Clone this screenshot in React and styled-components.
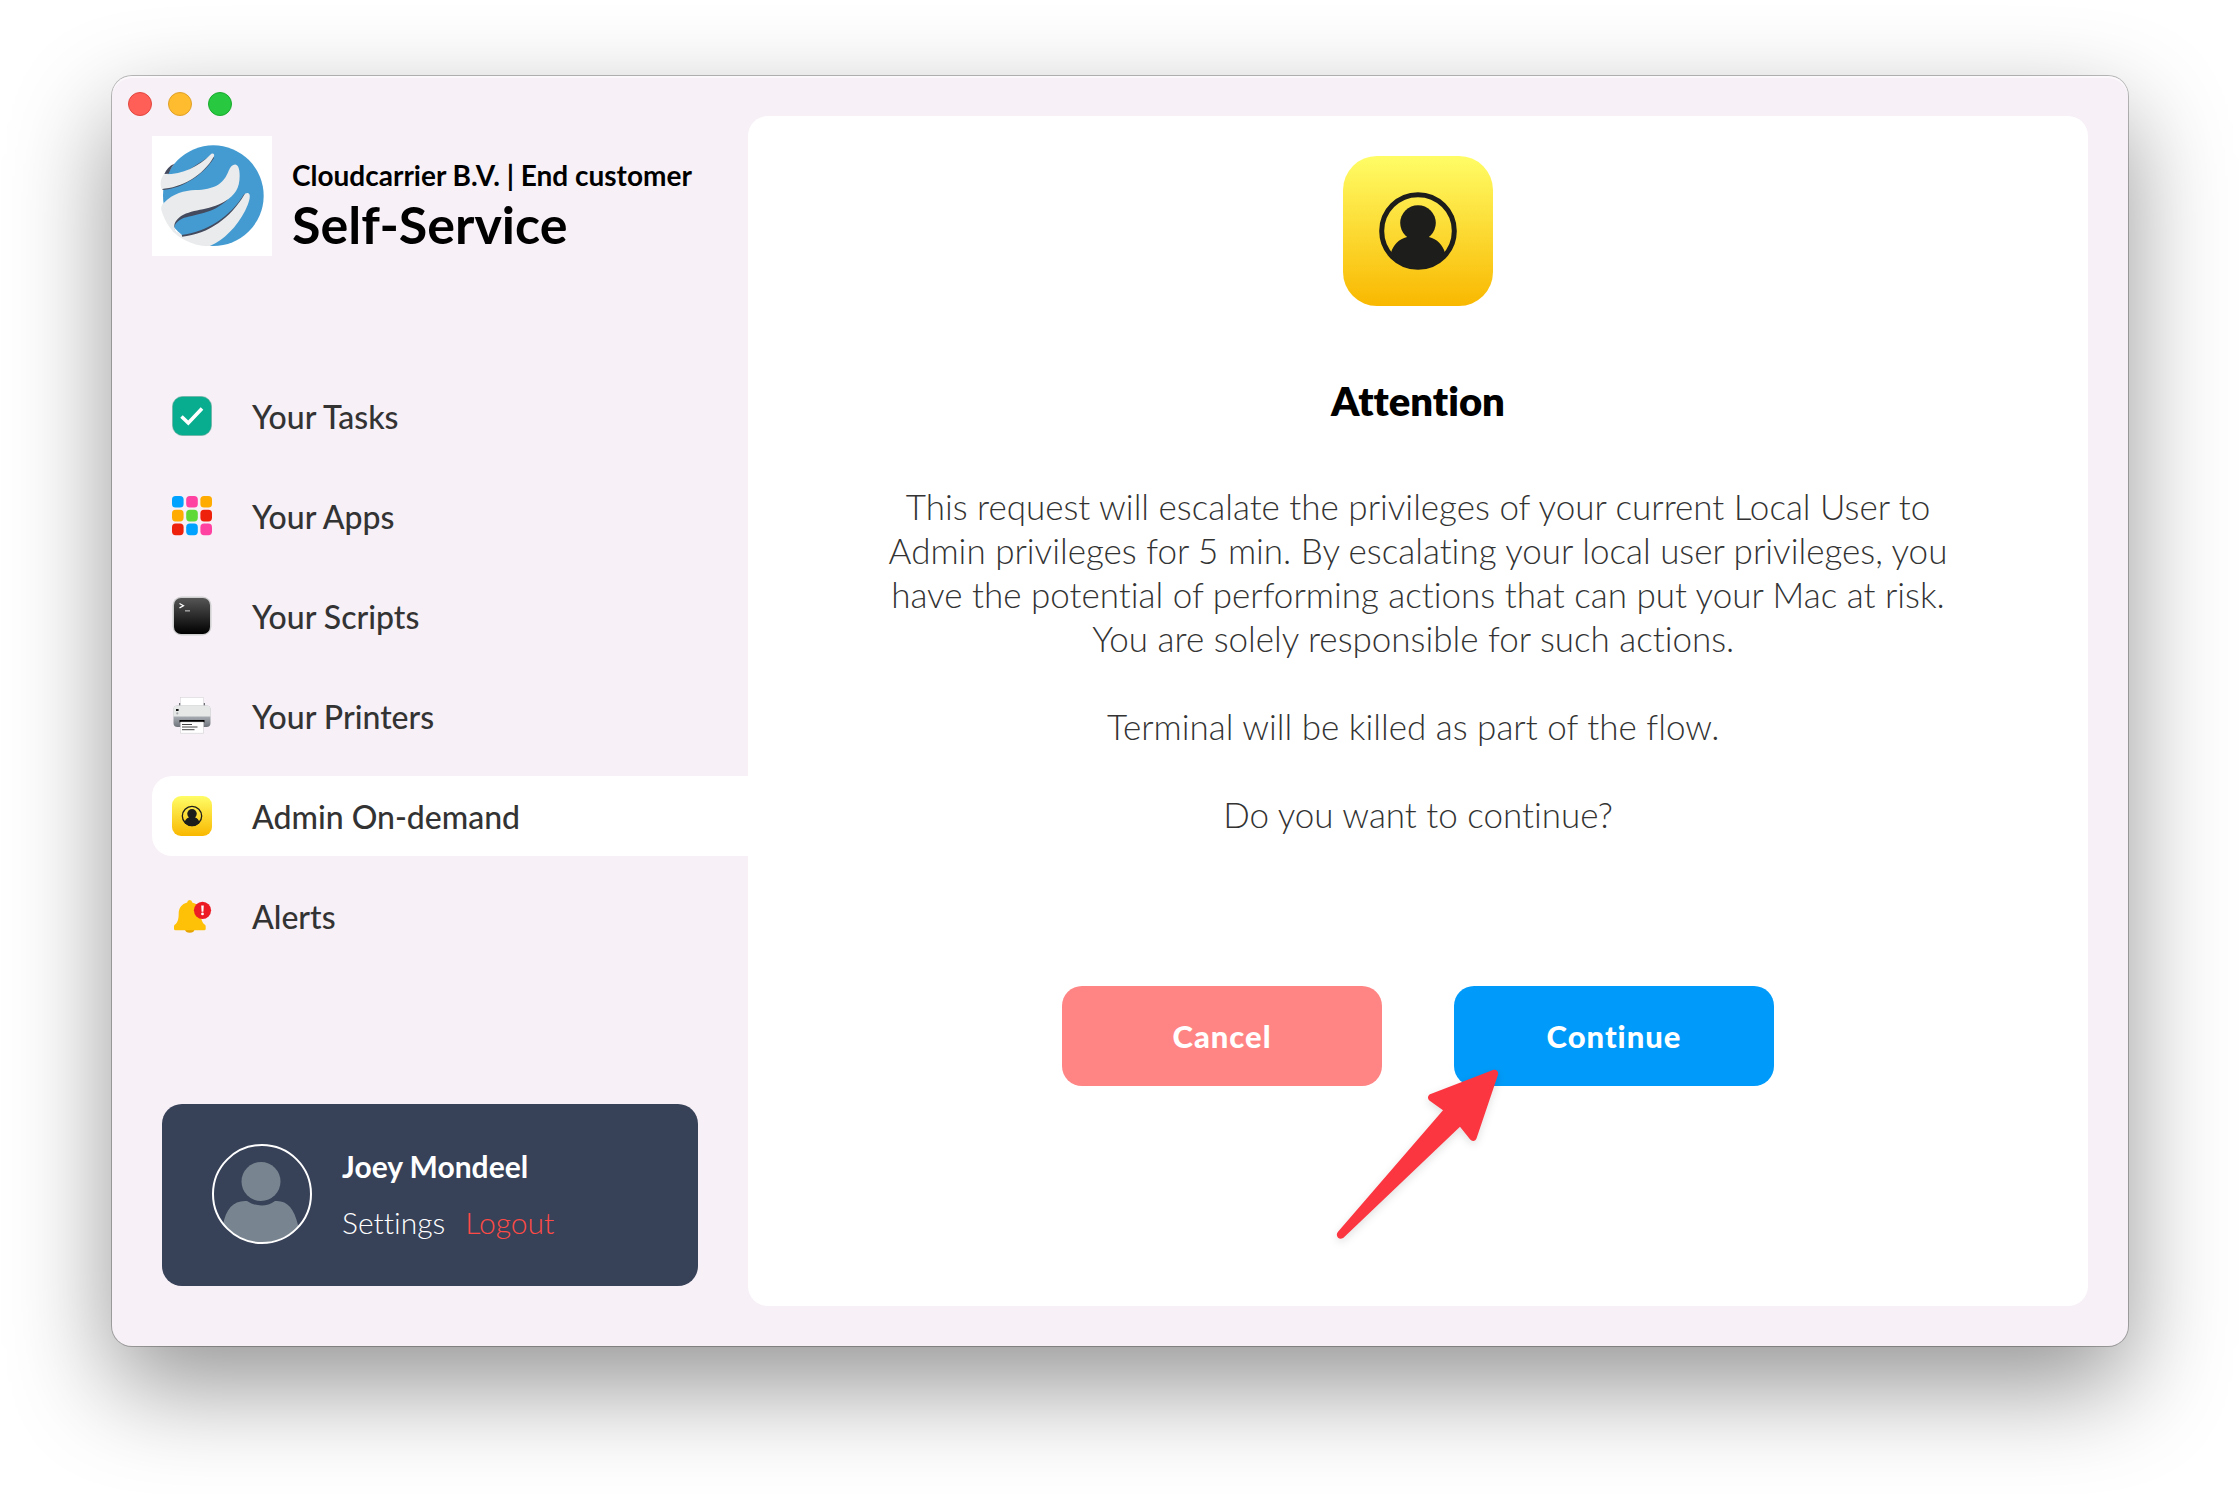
import styled, { createGlobalStyle } from "styled-components";

const GlobalStyle = createGlobalStyle`
  * {
    box-sizing: border-box;
  }

  body {
    margin: 0;
    background: #ffffff;
    font-family: "Lato", sans-serif;
    font-variant-ligatures: none;
    color: #333333;
  }
`;

const Desktop = styled.div`
  display: flex;
  min-height: 100vh;
  padding: 76px 112px 148px;
`;

const Window = styled.main`
  position: relative;
  display: flex;
  flex: 1;
  padding: 40px 40px 40px 0;
  border-radius: 20px;
  background: #f7f0f7;
  box-shadow:
    inset 0 2px 1px rgba(255, 255, 255, 0.6),
    0 0 0 1px rgba(0, 0, 0, 0.25),
    0 40px 100px rgba(0, 0, 0, 0.42);
`;

const TrafficLights = styled.div`
  position: absolute;
  top: 16px;
  left: 16px;
  display: flex;
  gap: 16px;
`;

const Light = styled.button`
  width: 24px;
  height: 24px;
  padding: 0;
  border: 1px solid ${({ $edge }) => $edge};
  border-radius: 50%;
  background: ${({ $color }) => $color};
`;

const Sidebar = styled.aside`
  display: flex;
  flex-direction: column;
  width: 636px;
  padding-left: 40px;
`;

const Brand = styled.header`
  display: flex;
  gap: 20px;
  margin: 20px 0 120px;
`;

const BrandLogo = styled.svg`
  width: 120px;
  height: 120px;
  background: #ffffff;
`;

const BrandText = styled.div`
  padding-top: 19px;
  color: #000000;
`;

const Company = styled.p`
  margin: 0;
  font-size: 28px;
  font-weight: 700;
  line-height: 40px;
`;

const Product = styled.h1`
  margin: 0;
  font-size: 52px;
  font-weight: 700;
  line-height: 58px;
`;

const Nav = styled.nav`
  display: flex;
  flex-direction: column;
  gap: 20px;
`;

const NavItem = styled.a`
  display: flex;
  align-items: center;
  gap: 40px;
  height: 80px;
  padding: 0 20px;
  border-radius: 20px 0 0 20px;
  background: ${({ $active }) => ($active ? "#ffffff" : "transparent")};
  color: #333333;
  font-size: 32px;
  font-weight: 500;
  text-decoration: none;

  svg {
    width: 40px;
    height: 40px;
  }
`;

const UserCard = styled.section`
  display: flex;
  align-items: center;
  gap: 30px;
  margin: auto 50px 20px 10px;
  padding: 40px 50px 42px;
  border-radius: 20px;
  background: #374158;
  color: #ffffff;

  svg {
    width: 100px;
    height: 100px;
  }
`;

const UserName = styled.p`
  margin: 0 0 16px;
  font-size: 30px;
  font-weight: 700;
  line-height: 40px;
`;

const UserLinks = styled.div`
  display: flex;
  gap: 20px;
`;

const UserLink = styled.a`
  color: ${({ $danger }) => ($danger ? "#ff4b45" : "#ffffff")};
  font-size: 30px;
  font-weight: 300;
  line-height: 40px;
  text-decoration: none;
`;

const Panel = styled.section`
  display: flex;
  flex: 1;
  flex-direction: column;
  align-items: center;
  padding: 40px;
  border-radius: 20px;
  background: #ffffff;
`;

const PanelIcon = styled.div`
  svg {
    display: block;
    width: 150px;
    height: 150px;
  }
`;

const Title = styled.h2`
  margin: 70px 0 58px;
  color: #000000;
  font-size: 40px;
  font-weight: 800;
  line-height: 50px;
`;

const Message = styled.p`
  margin: 0;
  font-size: 35px;
  font-weight: 300;
  line-height: 44px;
  text-align: center;
`;

const Actions = styled.div`
  display: flex;
  gap: 72px;
  margin-top: 150px;
`;

const ActionSlot = styled.div`
  position: relative;
`;

const ActionButton = styled.button`
  width: 320px;
  height: 100px;
  border: 0;
  border-radius: 20px;
  background: ${({ $primary }) => ($primary ? "#009bfa" : "#ff8585")};
  color: #ffffff;
  font-family: inherit;
  font-size: 31px;
  font-weight: 900;
  letter-spacing: 1px;
`;

const Arrow = styled.svg`
  position: absolute;
  top: 74px;
  left: -129px;
  width: 190px;
  height: 190px;
  filter: drop-shadow(0 3px 4px rgba(0, 0, 0, 0.12));
  pointer-events: none;
`;

function TasksIcon() {
    return (
        <svg viewBox="0 0 40 40" aria-hidden="true">
            <rect x="0.5" y="0.5" width="39" height="39" rx="10" fill="#08ad8f" stroke="#6fa79b" strokeWidth="0.6" />
            <path d="M9.5 20.5l6.8 6.5L30 12.5" fill="none" stroke="#fff" strokeWidth="3.6" />
        </svg>
    );
}

const APP_COLORS = [
    "#00a2ff", "#ff42a1", "#ffab00",
    "#ffab00", "#60d937", "#ee220c",
    "#ee220c", "#00a2ff", "#ff42a1",
];

function AppsIcon() {
    return (
        <svg viewBox="0 0 40 40" aria-hidden="true">
            {APP_COLORS.map((color, i) => (
                <rect
                    key={i}
                    x={(i % 3) * 14.2}
                    y={Math.floor(i / 3) * 13.8}
                    width="11.6"
                    height="11.6"
                    rx="3.6"
                    fill={color}
                />
            ))}
        </svg>
    );
}

function ScriptsIcon() {
    return (
        <svg viewBox="0 0 40 40" aria-hidden="true">
            <defs>
                <linearGradient id="terminal" x1="0" y1="0" x2="0" y2="1">
                    <stop offset="0" stopColor="#555" />
                    <stop offset="1" stopColor="#000" />
                </linearGradient>
            </defs>
            <rect x="0.5" y="0.5" width="39" height="39" rx="9" fill="#d0cfd0" />
            <rect x="2" y="2" width="36" height="36" rx="7" fill="url(#terminal)" />
            <path d="M7.5 7.5l4 2.2-4 2.2" fill="none" stroke="#fff" strokeWidth="1.2" />
            <path d="M13 14.8h5" stroke="#999" strokeWidth="1.6" />
        </svg>
    );
}

function PrintersIcon() {
    return (
        <svg viewBox="0 0 40 40" aria-hidden="true">
            <defs>
                <linearGradient id="tray" x1="0" y1="0" x2="0" y2="1">
                    <stop offset="0.5" stopColor="#a9adb3" />
                    <stop offset="1" stopColor="#6f747c" />
                </linearGradient>
            </defs>
            <path d="M7 10V7h26v3z" fill="#6d7177" />
            <rect x="8.5" y="1.5" width="23" height="12" fill="#fff" stroke="#d8d5d8" strokeWidth="0.6" />
            <rect x="1.5" y="9.5" width="37" height="21.5" rx="4" fill="url(#tray)" />
            <path d="M1.5 20.5v-7a4 4 0 014-4h29a4 4 0 014 4v7z" fill="#e6e8e8" />
            <rect x="4" y="13" width="2.6" height="2" fill="#111" />
            <circle cx="5.3" cy="17.4" r="1.1" fill="#a8abad" />
            <rect x="7.5" y="24" width="25" height="2.4" fill="#000" />
            <path d="M8.5 26h23v11.3h-23z" fill="#fff" stroke="#cbc8cb" strokeWidth="0.5" />
            <path d="M10 28.5h10M10 31h15.5M10 33.7h12.5" stroke="#444" strokeWidth="1" />
        </svg>
    );
}

function AdminIcon({ id }) {
    return (
        <svg viewBox="0 0 150 150" aria-hidden="true">
            <defs>
                <linearGradient id={id} x1="0" y1="0" x2="0" y2="1">
                    <stop offset="0" stopColor="#fffd66" />
                    <stop offset="1" stopColor="#f9b800" />
                </linearGradient>
                <clipPath id={`${id}-ring`}>
                    <circle cx="75" cy="75" r="38" />
                </clipPath>
            </defs>
            <rect width="150" height="150" rx="34" fill={`url(#${id})`} />
            <circle cx="75" cy="75" r="36.3" fill="none" stroke="#1d1d1b" strokeWidth="5" />
            <g clipPath={`url(#${id}-ring)`} fill="#1d1d1b">
                <circle cx="75" cy="67" r="17.8" />
                <path d="M64 78h22l0 3c8 2 14 8 16 16v20H48V97c2-8 8-14 16-16z" />
            </g>
        </svg>
    );
}

function AlertsIcon() {
    return (
        <svg viewBox="0 0 40 40" aria-hidden="true">
            <g transform="translate(0 3.7)">
                <path d="M13 30h9.5a4.8 3.5 0 01-9.5 0z" fill="#e5a400" />
                <path d="M17.7.2a2.6 2.6 0 012.5 2.5C26 4 29 8.5 29 13.5c0 6 1 9.5 4 11.5q.7.5.7 1.5v2.5q0 1.5-1.5 1.5H3.500Q2 30.5 2 29v-2.5q0-1 .7-1.5c3-2 4-5.5 4-11.5 0-5 3-9.500 8.500-10.800A2.600 2.600 0 0117.700.2z" fill="#ffc107" />
                <circle cx="30.5" cy="10.6" r="8.6" fill="#ed1c24" />
                <path d="M29.2 5.8h2.6l-.4 6.2h-1.8z" fill="#fff" />
                <circle cx="30.5" cy="14.2" r="1.4" fill="#fff" />
            </g>
        </svg>
    );
}

function Avatar() {
    return (
        <svg viewBox="0 0 100 100" role="img" aria-label="Joey Mondeel">
            <defs>
                <clipPath id="avatar">
                    <circle cx="50" cy="50" r="48.5" />
                </clipPath>
            </defs>
            <g clipPath="url(#avatar)" fill="#78848f">
                <circle cx="49" cy="37.5" r="19.5" />
                <path d="M35 57c9 6 20 6 28 0 12-1 19 7 23 24v19H11V81c3-17 11-25 24-24z" />
            </g>
            <circle cx="50" cy="50" r="49" fill="none" stroke="#fff" strokeWidth="2" />
        </svg>
    );
}

function GlobeLogo() {
    return (
        <BrandLogo viewBox="12 18 360 360" role="img" aria-label="Cloudcarrier">
            <circle cx="196" cy="197" r="151" fill="#449bd1" />
            {/* everything left of the bands is cut away from the globe */}
            <path d="M40 60h40l-2 42-26 30-12 50 5 40-5 130H20V60z" fill="#fff" />
            <g fill="#444b5e">
                <path d="M49 132c6-14 15-25 30-31-7 8-13 18-17 30z" />
                <path d="M42 180c48-2 117-35 156-96l-6-10L60 160z" />
                <path d="M84 308c-12-10-5-32 18-42 34-13 92-12 138-58l-30-10-150 60z" />
                <path d="M103 323c72-8 146-50 192-128l-6-4C246 262 176 304 101 315z" />
            </g>
            <g fill="#e9ebec">
                <path d="M48 133c54 1 104-24 139-59 6-7 14-3 11 5-31 58-98 95-157 98-5-14-4-31 7-44z" />
                <path d="M48 218c28-28 60-36 94-38 56-2 84-16 100-58 6-14 14-20 22-18 8 3 11 15 11 34 0 36-14 58-44 76-50 30-104 22-138 49-16 13-18 30-9 42l-1 3c-8 1-32-30-43-68-2-8 1-16 8-22z" />
                <path d="M80 303c10 6 18 4 22 17 80-6 148-60 186-124 4-8 14-10 17-1 2 13-6 32-14 48-25 47-62 87-106 105-46 3-92-24-112-45z" />
            </g>
        </BrandLogo>
    );
}

const NAV_ITEMS = [
    { label: "Your Tasks", icon: <TasksIcon /> },
    { label: "Your Apps", icon: <AppsIcon /> },
    { label: "Your Scripts", icon: <ScriptsIcon /> },
    { label: "Your Printers", icon: <PrintersIcon /> },
    { label: "Admin On-demand", icon: <AdminIcon id="admin-nav" />, active: true },
    { label: "Alerts", icon: <AlertsIcon /> },
];

export default function App() {
    return (
        <Desktop>
            <GlobalStyle />
            <Window>
                <TrafficLights>
                    <Light $color="#ff5f57" $edge="#e2463f" aria-label="Close" />
                    <Light $color="#febc2e" $edge="#e0a028" aria-label="Minimize" />
                    <Light $color="#28c840" $edge="#1aab2c" aria-label="Zoom" />
                </TrafficLights>

                <Sidebar>
                    <Brand>
                        <GlobeLogo />
                        <BrandText>
                            <Company>Cloudcarrier B.V. | End customer</Company>
                            <Product>Self-Service</Product>
                        </BrandText>
                    </Brand>

                    <Nav>
                        {NAV_ITEMS.map(({ label, icon, active }) => (
                            <NavItem key={label} href="#" $active={active}>
                                {icon}
                                <span>{label}</span>
                            </NavItem>
                        ))}
                    </Nav>

                    <UserCard>
                        <Avatar />
                        <div>
                            <UserName>Joey Mondeel</UserName>
                            <UserLinks>
                                <UserLink href="#">Settings</UserLink>
                                <UserLink href="#" $danger>Logout</UserLink>
                            </UserLinks>
                        </div>
                    </UserCard>
                </Sidebar>

                <Panel>
                    <PanelIcon>
                        <AdminIcon id="admin-panel" />
                    </PanelIcon>
                    <Title>Attention</Title>
                    <Message>
                        This request will escalate the privileges of your current Local User to
                        <br />
                        Admin privileges for 5 min. By escalating your local user privileges, you
                        <br />
                        have the potential of performing actions that can put your Mac at risk.
                        <br />
                        You are solely responsible for such actions.&nbsp;
                        <br />
                        <br />
                        Terminal will be killed as part of the flow.&nbsp;
                        <br />
                        <br />
                        Do you want to continue?
                    </Message>
                    <Actions>
                        <ActionButton>Cancel</ActionButton>
                        <ActionSlot>
                            <ActionButton $primary>Continue</ActionButton>
                            <Arrow viewBox="0 0 570 570" aria-hidden="true">
                                <path d="M504 30c9-3 18 4 15 14l-64 190c-3 10-13 12-20 4l-30-38L57 532c-12 12-29-4-18-17L354 151l-40-29c-8-6-6-17 3-20z" fill="#fb3640" />
                            </Arrow>
                        </ActionSlot>
                    </Actions>
                </Panel>
            </Window>
        </Desktop>
    );
}
